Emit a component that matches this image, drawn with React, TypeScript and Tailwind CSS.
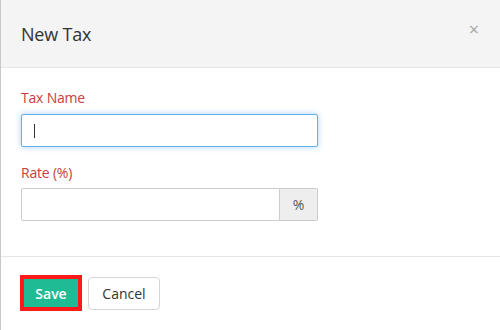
import React from "react";

export default function App() {
  return (
    <div
      className="w-[500px] h-[330px] bg-white border-l border-[#c8c8c8] flex flex-col overflow-hidden"
      style={{ fontFamily: "'Open Sans', Lato, sans-serif" }}
    >
      <div className="h-[68px] shrink-0 bg-[#f4f4f4] border-b border-[#e6e6e6] flex items-center justify-between pl-[20px] pr-[21px]">
        <div className="text-[18px] text-[#333] leading-none pt-[1px] tracking-[-0.2px]">New Tax</div>
        <div className="text-[#a8a8a8] text-[18px] leading-none -mt-[9px]">×</div>
      </div>
      <div className="px-[20px] pt-[20px] pb-[35px] border-b border-[#e6e6e6] flex flex-col">
        <label className="text-[14px] leading-[20px] text-[#c5403a] mb-[6px] tracking-[-0.2px]">Tax Name</label>
        <div className="w-[297px] h-[33px] border border-[#66afe9] rounded-[2px] shadow-[0_0_6px_rgba(102,175,233,0.55)] flex items-center pl-[12px] bg-white">
          <div className="w-[1px] h-[14px] bg-[#333]"></div>
        </div>
        <label className="text-[14px] leading-[20px] text-[#c5403a] mt-[16px] mb-[5px] tracking-[-0.2px]">Rate (%)</label>
        <div className="w-[297px] h-[33px] flex">
          <div className="flex-1 border border-[#ccc] rounded-l-[2px] bg-white"></div>
          <div className="w-[38px] border border-l-0 border-[#ccc] rounded-r-[2px] bg-[#eeeeee] flex items-center justify-center text-[14px] text-[#555]">
            %
          </div>
        </div>
      </div>
      <div className="flex items-center gap-[6px] pl-[19px] pt-[18px]">
        <button className="w-[62px] h-[36px] border-[4px] border-[#ff1a1a] bg-[#1fbb95] text-white text-[14px] font-semibold flex items-center justify-center">
          Save
        </button>
        <button className="w-[72px] h-[33px] border border-[#d6d6d6] rounded-[4px] bg-white text-[#333] text-[14px] flex items-center justify-center">
          Cancel
        </button>
      </div>
    </div>
  );
}
